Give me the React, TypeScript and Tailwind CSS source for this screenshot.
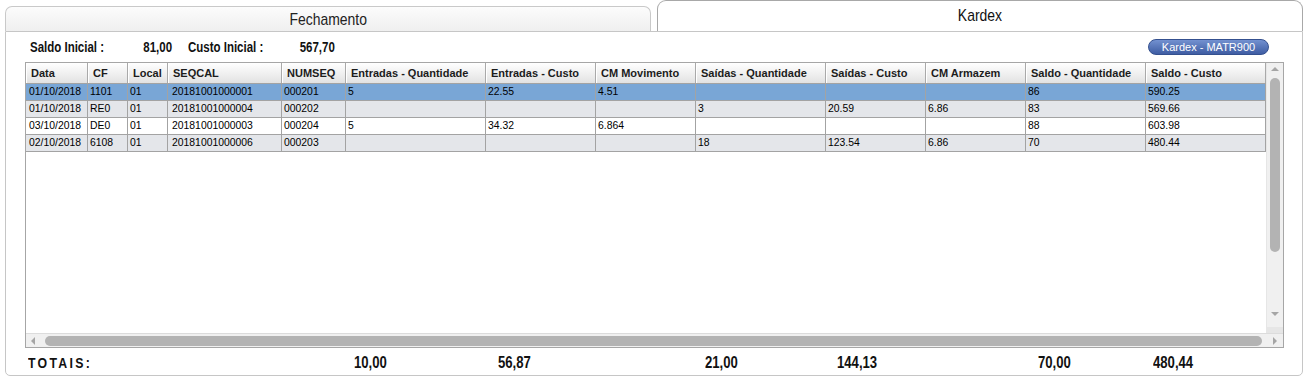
import React from 'react';

type Row = { cells: string[]; tone: 'sel' | 'gray' | 'white' };

const headers = [
    'Data',
    'CF',
    'Local',
    'SEQCAL',
    'NUMSEQ',
    'Entradas - Quantidade',
    'Entradas - Custo',
    'CM Movimento',
    'Saídas - Quantidade',
    'Saídas - Custo',
    'CM Armazem',
    'Saldo - Quantidade',
    'Saldo - Custo',
];

const rows: Row[] = [
    { tone: 'sel', cells: ['01/10/2018', '1101', '01', '20181001000001', '000201', '5', '22.55', '4.51', '', '', '', '86', '590.25'] },
    { tone: 'gray', cells: ['01/10/2018', 'RE0', '01', '20181001000004', '000202', '', '', '', '3', '20.59', '6.86', '83', '569.66'] },
    { tone: 'white', cells: ['03/10/2018', 'DE0', '01', '20181001000003', '000204', '5', '34.32', '6.864', '', '', '', '88', '603.98'] },
    { tone: 'gray', cells: ['02/10/2018', '6108', '01', '20181001000006', '000203', '', '', '', '18', '123.54', '6.86', '70', '480.44'] },
];

const gridCols = 'grid grid-cols-[62px_40px_40px_114px_64px_140px_110px_100px_130px_100px_100px_120px_120px]';

const toneClass = {
    sel: 'bg-[#79a6d6]',
    gray: 'bg-[#e4e6ea]',
    white: 'bg-white',
};

// no narrow face installed, so squeeze Liberation Sans
function Narrow({ children, className = '' }: { children: React.ReactNode; className?: string }) {
    return <span className={`inline-block scale-x-[0.82] whitespace-nowrap ${className}`}>{children}</span>;
}

function Tabs() {
    return (
        <div className="flex h-[31px] items-end gap-[6px] pl-[5px]">
            <div className="flex h-[25px] w-[646px] items-center justify-center rounded-t-[7px] border border-b-0 border-[#c9c9c9] bg-linear-to-b from-[#fcfcfc] to-[#efefef]">
                <Narrow className="origin-center text-[17px] leading-none text-[#222]">Fechamento</Narrow>
            </div>
            <div className="flex h-[31px] w-[646px] items-center justify-center rounded-t-[9px] border border-b-0 border-[#a8a8a8] bg-white pb-[2px]">
                <Narrow className="origin-center text-[17px] leading-none text-[#111]">Kardex</Narrow>
            </div>
        </div>
    );
}

function VScroll() {
    return (
        <div className="flex w-[17px] flex-col items-center border-l border-[#e6e6e6] bg-[#f0f0f0]">
            <div className="mt-[4px] h-0 w-0 border-x-[4px] border-b-[4px] border-x-transparent border-b-[#a5a5a5]" />
            <div className="mt-[7px] h-[174px] w-[10px] rounded-full bg-[#b3b3b3]" />
            <div className="flex-1" />
            <div className="mb-[11px] h-0 w-0 border-x-[4px] border-t-[4px] border-x-transparent border-t-[#a5a5a5]" />
            <div className="h-[6px] w-full bg-[#e6e6e6]" />
        </div>
    );
}

function HScroll() {
    return (
        <div className="flex h-[14px] items-center border-t border-[#dcdcdc] bg-[#f0f0f0]">
            <div className="ml-[5px] h-0 w-0 border-y-[4px] border-r-[4px] border-y-transparent border-r-[#a5a5a5]" />
            <div className="ml-[10px] h-[10px] w-[1217px] rounded-full bg-[#b3b3b3]" />
            <div className="ml-[11px] h-0 w-0 border-y-[4px] border-l-[4px] border-y-transparent border-l-[#a5a5a5]" />
        </div>
    );
}

function Grid() {
    return (
        <div className="ml-[19px] flex h-[286px] w-[1259px] flex-col border border-[#a6a6a6] bg-white">
            <div className="flex h-[270px]">
                <div className="w-[1240px]">
                    <div className={`${gridCols} h-[21px] border-b border-[#a3a3a3]`}>
                        {headers.map((h) => (
                            <div
                                key={h}
                                className="flex items-center border-r border-[#a9a9a9] bg-linear-to-b from-white to-[#e2e2e2] pl-[5px] text-[11px] font-bold whitespace-nowrap text-[#1c1c1c] shadow-[inset_1px_0_0_#ffffff]"
                            >
                                {h}
                            </div>
                        ))}
                    </div>
                    {rows.map((r, i) => (
                        <div key={i} className={`${gridCols} h-[17px] ${toneClass[r.tone]}`}>
                            {r.cells.map((c, j) => (
                                <div
                                    key={j}
                                    className={`flex items-center border-r border-b border-[#a3a3a3] text-[10.4px] whitespace-nowrap text-black ${j === 0 ? 'pl-[3px]' : j === 3 ? 'pl-[4px]' : 'pl-[2px]'}`}
                                >
                                    {c}
                                </div>
                            ))}
                        </div>
                    ))}
                </div>
                <div className="flex-1" />
                <VScroll />
            </div>
            <HScroll />
        </div>
    );
}

export default function App() {
    return (
        <div className="h-[377px] w-[1308px] overflow-hidden bg-white font-['Liberation_Sans',Arial,sans-serif]">
            <Tabs />
            <div className="ml-[5px] flex h-[345px] w-[1298px] flex-col rounded-b-[5px] border border-[#c6c6c6] bg-white">
                <div className="flex h-[30px] items-center pl-[24px] text-[14px] font-bold text-[#111]">
                    <span className="w-[90px]">
                        <Narrow className="origin-left">Saldo Inicial :</Narrow>
                    </span>
                    <span className="w-[52px] text-right">
                        <Narrow className="origin-right">81,00</Narrow>
                    </span>
                    <span className="ml-[16px] w-[90px]">
                        <Narrow className="origin-left">Custo Inicial :</Narrow>
                    </span>
                    <span className="w-[57px] text-right">
                        <Narrow className="origin-right">567,70</Narrow>
                    </span>
                    <div className="mr-[33px] ml-auto flex h-[16px] w-[121px] items-center justify-center rounded-full border border-[#34508f] bg-linear-to-b from-[#7391d0] to-[#3f5da3] text-[11px] font-normal text-white">
                        Kardex - MATR900
                    </div>
                </div>
                <Grid />
                <div className={`${gridCols} flex-1 items-center pt-[2px] pl-[20px] text-[16px] font-bold text-[#111]`}>
                    <span className="pl-[2px]">
                        <Narrow className="origin-left text-[15px] tracking-[2.8px]">TOTAIS:</Narrow>
                    </span>
                    <span />
                    <span />
                    <span />
                    <span />
                    <span className="pl-[8px]">
                        <Narrow className="origin-left">10,00</Narrow>
                    </span>
                    <span className="pl-[12px]">
                        <Narrow className="origin-left">56,87</Narrow>
                    </span>
                    <span />
                    <span className="pl-[9px]">
                        <Narrow className="origin-left">21,00</Narrow>
                    </span>
                    <span className="pl-[11px]">
                        <Narrow className="origin-left">144,13</Narrow>
                    </span>
                    <span />
                    <span className="pl-[12px]">
                        <Narrow className="origin-left">70,00</Narrow>
                    </span>
                    <span className="pl-[7px]">
                        <Narrow className="origin-left">480,44</Narrow>
                    </span>
                </div>
            </div>
        </div>
    );
}
